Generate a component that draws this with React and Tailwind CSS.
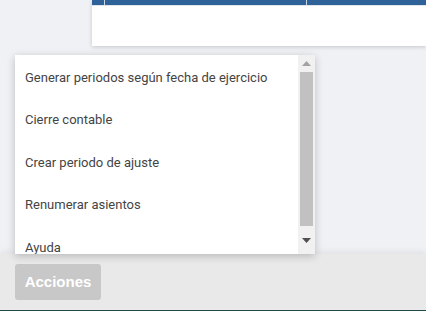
import React from 'react';

const items = [
  'Generar periodos según fecha de ejercicio',
  'Cierre contable',
  'Crear periodo de ajuste',
  'Renumerar asientos',
  'Ayuda',
];

function App() {
  return (
    <div className="w-[426px] h-[311px] bg-[#f0f1f5] flex flex-col overflow-hidden font-['Roboto',sans-serif]">
      {/* top table card */}
      <div className="ml-[92px] h-[46px] bg-white shadow-[0_1px_4px_rgba(0,0,0,0.18)] flex flex-col shrink-0">
        <div className="h-[5px] bg-[#2f6299] flex">
          <div className="w-[13px] border-r border-[#c9d6e6]" />
          <div className="w-[202px] border-r border-[#c9d6e6]" />
          <div className="flex-1" />
        </div>
        <div className="h-px bg-[#dfe4ea]" />
      </div>

      {/* dropdown menu */}
      <div className="mt-[9px] ml-[15px] w-[300px] h-[199px] bg-white shadow-[0_2px_8px_rgba(0,0,0,0.22)] flex shrink-0 relative z-10">
        <ul className="flex-1 overflow-hidden pt-px">
          {items.map((item) => (
            <li
              key={item}
              className="h-[42.5px] flex items-center pl-[10px] text-[13px] text-[#444444] shrink-0"
            >
              {item}
            </li>
          ))}
        </ul>
        <div className="w-[17px] bg-[#f1f1f1] flex flex-col items-center">
          <div className="h-[17px] flex items-center justify-center">
            <svg width="9" height="5" viewBox="0 0 9 5">
              <path d="M0 5 L4.5 0 L9 5 Z" fill="#a3a3a3" />
            </svg>
          </div>
          <div className="w-[13px] h-[154px] bg-[#c1c1c1]" />
          <div className="flex-1 flex items-center justify-center">
            <svg width="9" height="5" viewBox="0 0 9 5">
              <path d="M0 0 L9 0 L4.5 5 Z" fill="#505050" />
            </svg>
          </div>
        </div>
      </div>

      {/* bottom action bar */}
      <div className="flex-1 bg-[#e9e9e9] shadow-[0_-3px_6px_rgba(0,0,0,0.06)] flex flex-col">
        <div className="flex-1 pt-[10px] pl-[15px]">
          <button className="w-[86px] h-[36px] rounded-[3px] bg-[#c8c8c8] text-white font-bold text-[15px] font-['Liberation_Sans',sans-serif]">
            Acciones
          </button>
        </div>
        <div className="h-px bg-[#1f4a4c]" />
      </div>
    </div>
  );
}

export default App;
